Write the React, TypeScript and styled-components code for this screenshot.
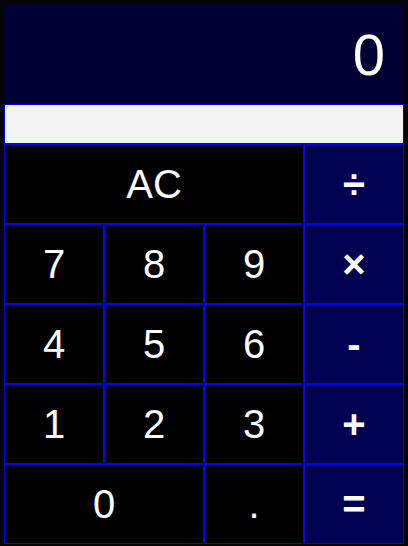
import React from "react";
import styled, { createGlobalStyle } from "styled-components";

const GlobalStyle = createGlobalStyle`
  html, body {
    margin: 0;
    padding: 0;
    background: #050505;
  }
  body {
    font-family: "Liberation Sans", Arial, sans-serif;
  }
`;

const Frame = styled.div`
  padding: 4px;
  width: 400px;
`;

const Calculator = styled.div`
  display: flex;
  flex-direction: column;
  width: 400px;
`;

const Display = styled.div`
  height: 100px;
  box-sizing: border-box;
  background: #000033;
  color: #ffffff;
  font-size: 58px;
  display: flex;
  align-items: center;
  justify-content: flex-end;
  padding-right: 19px;
`;

const Formula = styled.div`
  height: 40px;
  box-sizing: border-box;
  background: #f3f3f3;
  border: 1px solid #0000ff;
`;

const Keypad = styled.div`
  display: grid;
  grid-template-columns: repeat(4, 100px);
  grid-auto-rows: 80px;
`;

const Key = styled.button<{ $span?: number; $op?: boolean }>`
  grid-column: span ${(p) => p.$span ?? 1};
  box-sizing: border-box;
  margin: 0;
  padding: 0;
  border: 1px solid #0000ff;
  border-radius: 0;
  background: ${(p) => (p.$op ? "#000050" : "#000000")};
  color: #ffffff;
  font-family: "Liberation Sans", Arial, sans-serif;
  font-size: 40px;
  font-weight: ${(p) => (p.$op ? 700 : 400)};
  display: flex;
  align-items: center;
  justify-content: center;
  cursor: pointer;
`;

const keys: { label: string; span?: number; op?: boolean }[] = [
  { label: "AC", span: 3 },
  { label: "÷", op: true },
  { label: "7" },
  { label: "8" },
  { label: "9" },
  { label: "×", op: true },
  { label: "4" },
  { label: "5" },
  { label: "6" },
  { label: "-", op: true },
  { label: "1" },
  { label: "2" },
  { label: "3" },
  { label: "+", op: true },
  { label: "0", span: 2 },
  { label: "." },
  { label: "=", op: true },
];

export default function App() {
  return (
    <>
      <GlobalStyle />
      <Frame>
        <Calculator>
          <Display>0</Display>
          <Formula />
          <Keypad>
            {keys.map((k) => (
              <Key key={k.label} $span={k.span} $op={k.op}>
                {k.label}
              </Key>
            ))}
          </Keypad>
        </Calculator>
      </Frame>
    </>
  );
}
